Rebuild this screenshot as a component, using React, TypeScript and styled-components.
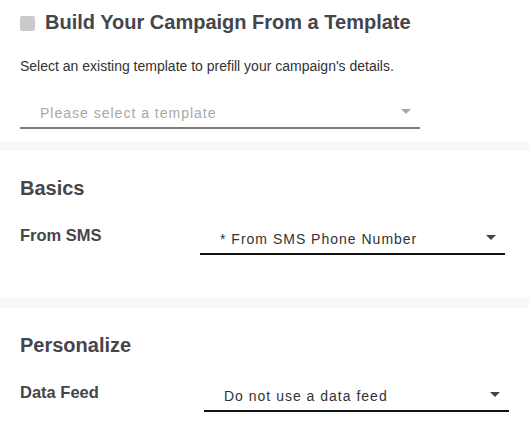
import React from "react";
import styled, { createGlobalStyle } from "styled-components";

const GlobalStyles = createGlobalStyle`
  html, body {
    margin: 0;
    padding: 0;
    background: #f8f8f8;
    font-family: "Liberation Sans", Arial, sans-serif;
  }
`;

// Layout

const Page = styled.div`
  display: flex;
  flex-direction: column;
  gap: 10px;
  min-height: 440px;
`;

const Section = styled.section<{ $top: number; $bottom: number }>`
  background: #ffffff;
  padding: ${(p) => p.$top}px 20px ${(p) => p.$bottom}px;
`;

const TitleRow = styled.div`
  display: flex;
  align-items: flex-start;
  gap: 10px;
`;

const Square = styled.span`
  flex: none;
  width: 15px;
  height: 15px;
  margin-top: 5px;
  border-radius: 2px;
  background: #cbcbcb;
`;

const Title = styled.h1`
  margin: 0;
  font-size: 20px;
  line-height: 23px;
  font-weight: 700;
  color: #45454b;
`;

const Intro = styled.p`
  margin: 23.5px 0 0;
  font-size: 14px;
  line-height: 16px;
  color: #333333;
`;

const TemplateField = styled.div`
  margin-top: 26.5px;
`;

const Heading = styled.h2`
  margin: 0;
  font-size: 20px;
  line-height: 23px;
  font-weight: 700;
  color: #45454b;
`;

const FieldRow = styled.div<{ $labelWidth: number }>`
  display: grid;
  grid-template-columns: ${(p) => p.$labelWidth}px 305px;
  align-items: start;
  margin-top: 25.5px;
`;

const Label = styled.label`
  font-size: 16.5px;
  line-height: 19px;
  font-weight: 700;
  color: #45454b;
`;

// Select

const SelectBox = styled.div<{ $width?: number; $muted?: boolean }>`
  box-sizing: content-box;
  display: flex;
  align-items: center;
  justify-content: space-between;
  width: ${(p) => (p.$width ? `${p.$width - 29}px` : "auto")};
  height: 27px;
  padding: 0 9px 0 20px;
  border-bottom: 2px solid ${(p) => (p.$muted ? "#7d7d7d" : "#111111")};
  cursor: pointer;
`;

const SelectText = styled.span<{ $muted?: boolean }>`
  font-size: 14px;
  line-height: 27px;
  letter-spacing: 1px;
  color: ${(p) => (p.$muted ? "#a8a8a8" : "#333333")};
  white-space: nowrap;
`;

const Caret = styled.span<{ $muted?: boolean }>`
  flex: none;
  width: 0;
  height: 0;
  margin-bottom: 4px;
  border-left: 5px solid transparent;
  border-right: 5px solid transparent;
  border-top: 5px solid ${(p) => (p.$muted ? "#a8a8a8" : "#444444")};
`;

interface SelectProps {
  value: string;
  width?: number;
  muted?: boolean;
}

const Select: React.FC<SelectProps> = ({ value, width, muted }) => (
  <SelectBox $width={width} $muted={muted}>
    <SelectText $muted={muted}>{value}</SelectText>
    <Caret $muted={muted} />
  </SelectBox>
);

const App: React.FC = () => {
  return (
    <>
      <GlobalStyles />
      <Page>
        <Section $top={11} $bottom={12}>
          <TitleRow>
            <Square />
            <Title>Build Your Campaign From a Template</Title>
          </TitleRow>
          <Intro>
            Select an existing template to prefill your campaign's details.
          </Intro>
          <TemplateField>
            <Select value="Please select a template" width={400} muted />
          </TemplateField>
        </Section>

        <Section $top={26} $bottom={43}>
          <Heading>Basics</Heading>
          <FieldRow $labelWidth={180}>
            <Label>From SMS</Label>
            <Select value="* From SMS Phone Number" />
          </FieldRow>
        </Section>

        <Section $top={26.5} $bottom={30}>
          <Heading>Personalize</Heading>
          <FieldRow $labelWidth={184}>
            <Label>Data Feed</Label>
            <Select value="Do not use a data feed" />
          </FieldRow>
        </Section>
      </Page>
    </>
  );
};

export default App;
